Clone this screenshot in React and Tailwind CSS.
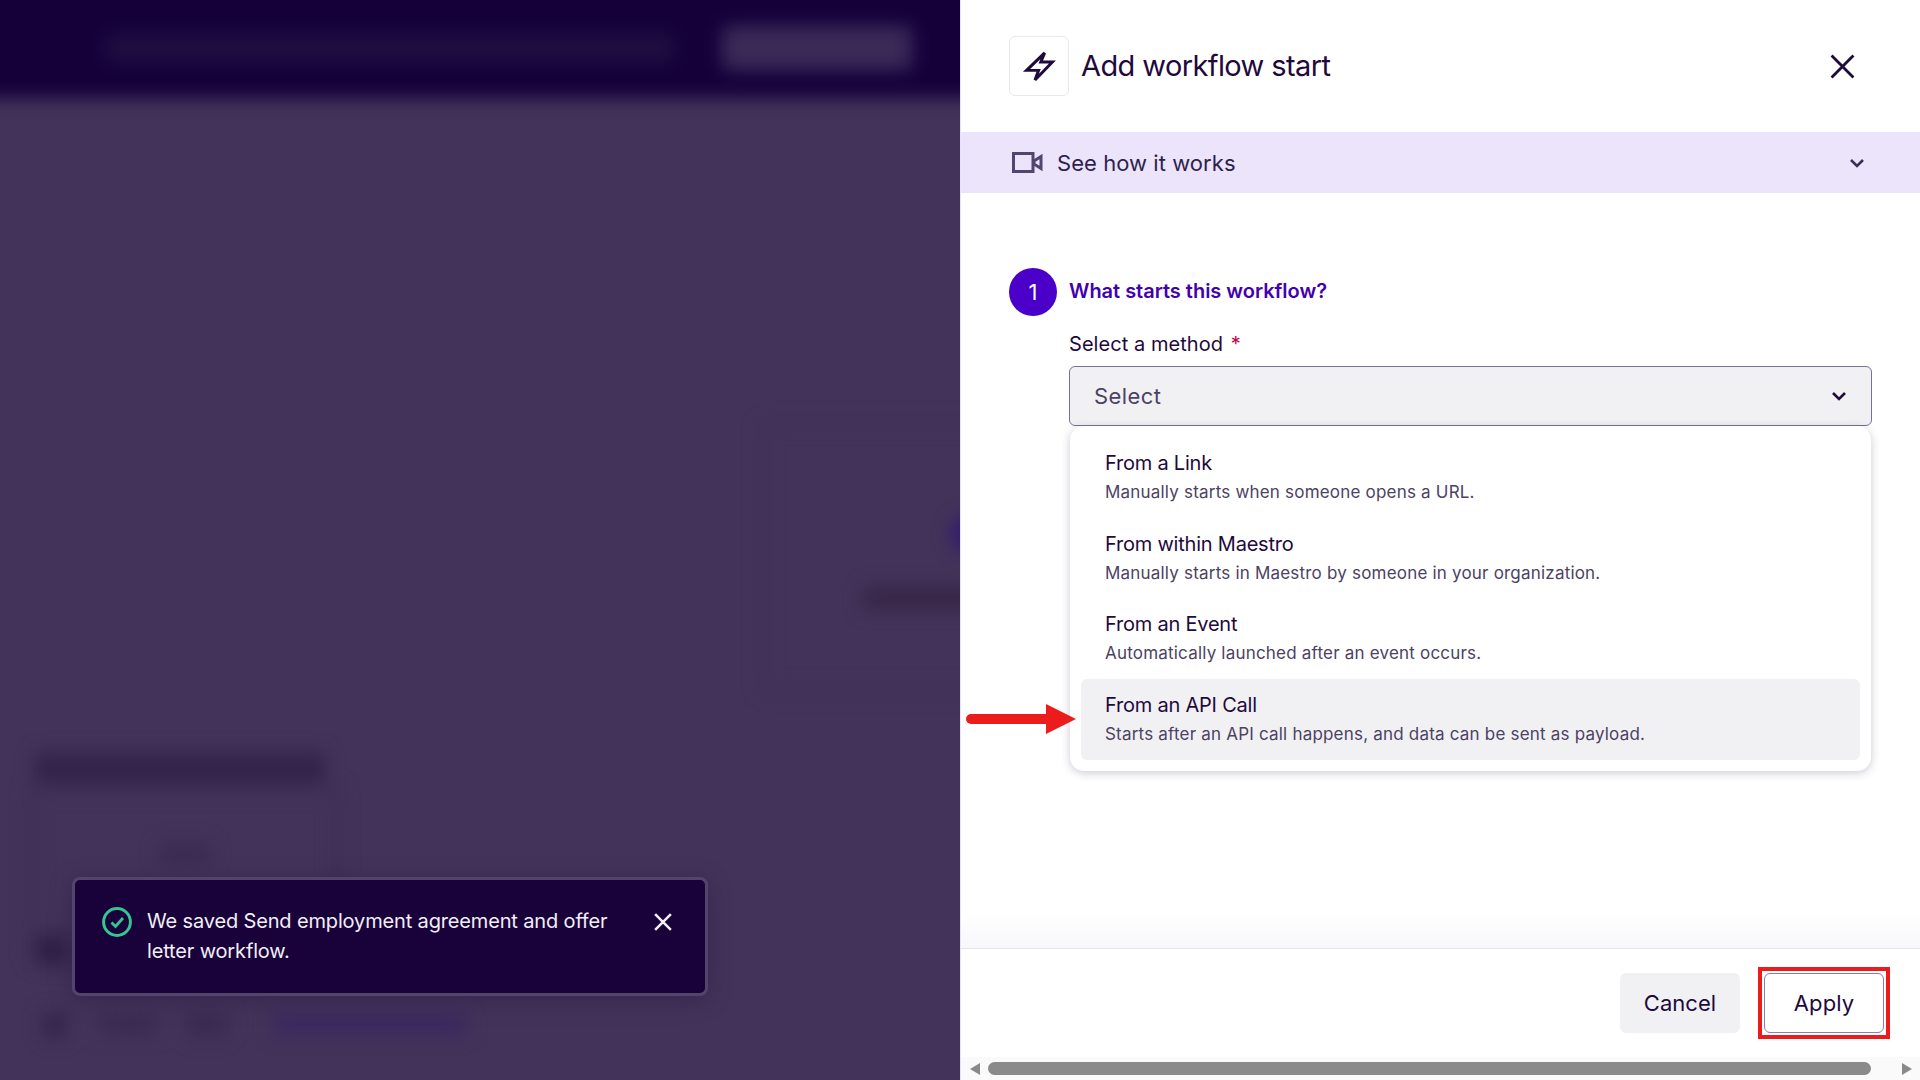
import { useState } from "react";

const font = "font-['Inter',sans-serif]";

const methods = [
  { title: "From a Link", desc: "Manually starts when someone opens a URL." },
  { title: "From within Maestro", desc: "Manually starts in Maestro by someone in your organization." },
  { title: "From an Event", desc: "Automatically launched after an event occurs." },
  { title: "From an API Call", desc: "Starts after an API call happens, and data can be sent as payload.", active: true },
];

function Chevron({ className }) {
  return (
    <svg width="16" height="10" viewBox="0 0 16 10" fill="none" stroke="currentColor" strokeWidth="2.6" className={className}>
      <path d="M2 2l6 6 6-6" />
    </svg>
  );
}

function Cross({ size, width, className }) {
  return (
    <svg width={size} height={size} viewBox="0 0 24 24" fill="none" stroke="currentColor" strokeWidth={width} className={className}>
      <path d="M1.5 1.5l21 21M22.5 1.5l-21 21" />
    </svg>
  );
}

// what sits behind the side panel, just blurred out
function Backdrop() {
  return (
    <div className="-mx-8 -mt-8 blur-[9px]">
      <div className="flex h-[130px] items-end bg-[#15003a] pb-[28px] pl-[136px]">
        <div className="mb-[7px] h-[30px] w-[570px] bg-[#1f0d40]"></div>
        <div className="ml-[48px] h-[44px] w-[190px] rounded-md bg-[#3b2a58]"></div>
      </div>
      <div className="flex justify-between pl-[62px]">
        <div className="w-[310px] pt-[655px]">
          <div className="ml-[5px] h-[30px] w-[290px] bg-[#33234a]"></div>
          <div className="mt-[3px] flex h-[175px] justify-center border-[5px] border-[#3b2b51]">
            <div className="mt-[52px] h-[20px] w-[50px] bg-[#3a2a50]"></div>
          </div>
          <div className="-mt-[26px] ml-[7px] h-[30px] w-[30px] bg-[#2f1e45]"></div>
          <div className="mt-[47px] flex w-max items-center">
            <div className="ml-[13px] h-[26px] w-[24px] bg-[#35254b]"></div>
            <div className="ml-[33px] h-[20px] w-[57px] bg-[#3a2a50]"></div>
            <div className="ml-[30px] h-[24px] w-[40px] bg-[#3a2a50]"></div>
            <div className="ml-[46px] h-[20px] w-[194px] bg-[#3a2860]"></div>
          </div>
        </div>
        <div className="mt-[324px] flex h-[270px] w-[230px] flex-col items-end border-[3px] border-[#3e2e54] pt-[90px]">
          <div className="h-[38px] w-[38px] rounded-full bg-[#311c6c]"></div>
          <div className="mt-[34px] h-[22px] w-[126px] bg-[#372646]"></div>
        </div>
      </div>
    </div>
  );
}

function Toast() {
  return (
    <div className="absolute left-[72px] top-[877px] flex h-[119px] w-[636px] items-start rounded-lg border-[3px] border-[#53446b] bg-[#19023a] pl-[27px] pr-[33px] pt-[26px] text-white shadow-[0_4px_24px_rgba(20,0,50,0.25)]">
      <svg width="30" height="30" viewBox="0 0 30 30" fill="none" stroke="#36c493" className="mt-[1px] shrink-0">
        <circle cx="15" cy="15" r="13.4" strokeWidth="3" />
        <path d="M9.5 15.5l4 4 7.5-8.5" strokeWidth="2.8" />
      </svg>
      <p className="ml-[15px] w-[475px] text-[20px] leading-[30px] tracking-[-0.15px] text-[#f2eff7]">
        We saved Send employment agreement and offer letter workflow.
      </p>
      <Cross size={18} width="3.4" className="ml-auto mt-[7px] shrink-0 text-[#f2eff7]" />
    </div>
  );
}

function App() {
  const [method] = useState(null);

  return (
    <div className={`flex h-screen w-full overflow-hidden ${font} text-[#1e0a3c]`}>
      <div className="relative h-full w-[960px] shrink-0 overflow-hidden bg-[#43335a]">
        <Backdrop />
        <Toast />
      </div>

      <div className="relative flex h-full w-[960px] shrink-0 flex-col border-l border-[#e6e3f0] bg-white">
        <div className="flex h-[132px] shrink-0 items-start pl-[48px] pt-[36px]">
          <div className="flex h-[60px] w-[60px] items-center justify-center rounded-md border border-[#e9e7f1]">
            <svg width="31" height="31" viewBox="0 0 24 24" fill="none" stroke="#1e0a3c" strokeWidth="2.3" className="overflow-visible">
              <path d="M16 1.5L2 15h9.3L8.5 22.5 22 8.5h-9z" />
            </svg>
          </div>
          <h1 className="ml-[12px] mt-[13px] text-[29px] font-normal leading-[34px] tracking-[-0.6px]">Add workflow start</h1>
          <Cross size={25} width="2.7" className="ml-auto mr-[65px] mt-[18px]" />
        </div>

        <div className="flex h-[61px] shrink-0 items-center bg-[#ece4fb] pl-[51px] pr-[55px]">
          <svg width="31" height="21" viewBox="0 0 31 21" fill="none" stroke="#54456f" strokeWidth="3">
            <rect x="1.5" y="1.5" width="19.5" height="18" />
            <path d="M22 9L29 4.5V16.5L22 12z" />
          </svg>
          <span className="ml-[14px] mt-[1px] text-[22px] tracking-[0.05px] text-[#2f1f4d]">See how it works</span>
          <Chevron className="ml-auto text-[#3b2d58]" />
        </div>

        <div className="relative flex-1 bg-gradient-to-b from-white from-95% to-[#f8f8fb] pl-[48px] pr-[48px] pt-[75px]">
          <div className="flex items-center">
            <div className="flex h-[48px] w-[48px] items-center justify-center rounded-full bg-[#4a00c8] text-[22px] text-white">1</div>
            <h2 className="mb-[2px] ml-[12px] text-[20px] font-semibold tracking-[-0.02px] text-[#4300b0]">What starts this workflow?</h2>
          </div>

          <div className="pl-[60px]">
            <label className="mt-[14px] block text-[20px] leading-[28px] tracking-[0.05px]">
              Select a method <span className="ml-[2px] text-[#c4004f]">*</span>
            </label>
            <div className="relative mt-[8px]">
              <div className="flex h-[60px] items-center justify-between rounded-md border border-[#7d6f94] bg-[#f1f1f4] pl-[24px] pr-[24px]">
                <span className="text-[22px] tracking-[0.4px] text-[#4d4263]">{method || "Select"}</span>
                <Chevron className="text-[#1e0a3c]" />
              </div>
              <div className="absolute left-px right-px top-[60px] rounded-[14px] bg-white px-[11px] pb-[11px] pt-[11px] shadow-[0_2px_10px_rgba(30,10,60,0.22)]">
                {methods.map((m) => (
                  <div key={m.title} className={`flex flex-col justify-center rounded-md pl-[24px] ${m.active ? "h-[81.5px] bg-[#f1f1f4]" : "h-[80.5px]"}`}>
                    <div className="text-[20px] leading-[28px] tracking-[-0.22px]">{m.title}</div>
                    <div className="mt-[2px] text-[17px] leading-[26px] tracking-[0.2px] text-[#4c4263]">{m.desc}</div>
                  </div>
                ))}
              </div>
            </div>
          </div>
        </div>

        <div className="flex h-[109px] shrink-0 items-start justify-end gap-[18px] border-t border-[#e6e4ee] pr-[30px] pt-[18px]">
          <button className="mt-[6px] h-[60px] w-[120px] rounded-md bg-[#f1f1f4] text-[22px] tracking-[0.05px]">Cancel</button>
          <div className="border-4 border-[#ed1c1c] p-[2px]">
            <button className="block h-[60px] w-[120px] rounded-md border border-[#8a7fa0] text-[22px] tracking-[0.1px]">Apply</button>
          </div>
        </div>

        <div className="flex h-[23px] shrink-0 items-center bg-[#fafafa] pl-[9px]">
          <svg width="10" height="12" viewBox="0 0 10 12" fill="#8a8a8a"><path d="M10 0v12L0 6z" /></svg>
          <div className="ml-[8px] h-[13px] w-[883px] rounded-full bg-[#8a8a8a]"></div>
          <svg width="10" height="12" viewBox="0 0 10 12" fill="#8a8a8a" className="ml-[31px]"><path d="M0 0v12l10-6z" /></svg>
        </div>

        <svg width="110" height="30" viewBox="0 0 110 30" className="absolute left-[5px] top-[704px]" fill="#ed1c1c">
          <path d="M5 10h75V0l30 15-30 15V20H5a5 5 0 010-10z" />
        </svg>
      </div>
    </div>
  );
}

export default App;
